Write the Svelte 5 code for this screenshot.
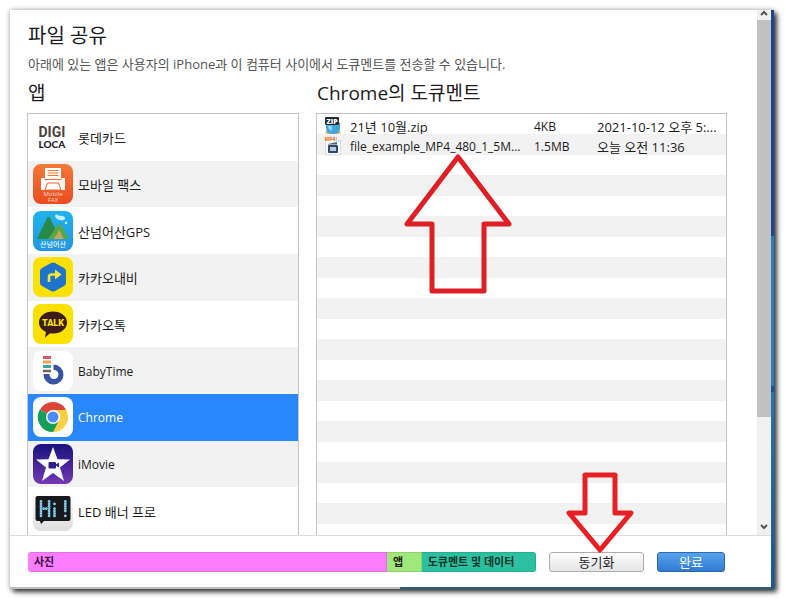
<script>
  let selected = $state('chrome');

  const apps = [
    { id: 'digiloca', name: '롯데카드' },
    { id: 'fax', name: '모바일 팩스' },
    { id: 'gps', name: '산넘어산GPS' },
    { id: 'navi', name: '카카오내비' },
    { id: 'talk', name: '카카오톡' },
    { id: 'baby', name: 'BabyTime' },
    { id: 'chrome', name: 'Chrome' },
    { id: 'imovie', name: 'iMovie' },
    { id: 'led', name: 'LED 배너 프로' }
  ];

  const files = [
    { kind: 'zip', name: '21년 10월.zip', size: '4KB', date: '2021-10-12 오후 5:...' },
    { kind: 'mp4', name: 'file_example_MP4_480_1_5M...', size: '1.5MB', date: '오늘 오전 11:36' }
  ];

  // striped rows under the files
  const emptyRows = Array(19).fill(0);

  const usage = [
    { id: 'photos', label: '사진', share: 360 },
    { id: 'apps', label: '앱', share: 34 },
    { id: 'docs', label: '도큐멘트 및 데이터', share: 114 }
  ];

  // lit dots of the LED sign
  const led = [
    '1001000001',
    '1001010001',
    '1001000001',
    '1111010001',
    '1001010001',
    '1001010000',
    '1001010001'
  ];

  const hasHangul = (text) => /[가-힣]/.test(text);
</script>

<div class="desktop">
  <div class="window">
    <div class="body">
      <main>
        <header>
          <h1>파일 공유</h1>
          <p>아래에 있는 앱은 사용자의 iPhone과 이 컴퓨터 사이에서 도큐멘트를 전송할 수 있습니다.</p>
        </header>
        <div class="columns">
          <section>
            <h2>앱</h2>
            <ul class="apps">
              {#each apps as app}
                <li>
                  <button class="app" class:selected={selected === app.id} onclick={() => (selected = app.id)}>
                    <svg class="icon" viewBox="0 0 40 40" aria-hidden="true">
                      {#if app.id === 'digiloca'}
                        <rect width="40" height="40" rx="8" fill="#fff" />
                        <text x="5.500" y="20" font-size="14" font-weight="700" class="digi">DIGI</text>
                        <text x="5.500" y="30.500" font-size="10" font-weight="900" class="loca">LOCA</text>
                      {:else if app.id === 'fax'}
                        <defs>
                          <linearGradient id="fax" x2="0" y2="1"><stop stop-color="#f47a38" /><stop offset="1" stop-color="#ea4b1f" /></linearGradient>
                        </defs>
                        <rect width="40" height="40" rx="8" fill="url(#fax)" />
                        <rect x="12" y="4" width="16" height="11" fill="#fff" />
                        <path d="M14.500 6.500h11M14.500 9h11M14.500 11.500h11" stroke="#f17336" stroke-width="1.200" />
                        <path d="M8 14h3.500v2h17v-2H32v12h-4l-2-6H14l-2 6H8z" fill="#fff" />
                        <path d="M14.500 19h11l2.500 7H12z" fill="#fff" stroke="#ef6430" />
                        <text x="20" y="32" text-anchor="middle" font-size="6" fill="#ffd8c4">Mobile</text>
                        <text x="20" y="38" text-anchor="middle" font-size="6" fill="#ffd8c4">FAX</text>
                      {:else if app.id === 'gps'}
                        <defs>
                          <linearGradient id="gps" x2="0" y2="1"><stop stop-color="#20b2ec" /><stop offset="1" stop-color="#2496e3" /></linearGradient>
                        </defs>
                        <rect width="40" height="40" rx="8" fill="url(#gps)" />
                        <path d="M4 28 14 7q1.500-2.500 3 0l10 21z" fill="#278a47" />
                        <path d="M15 28l10-14q1.500-2 3 0l8 14z" fill="#55a846" />
                        <path d="M21 28c1-4 5-5 4-9 5 3 3 6 6 9z" fill="#c9a557" />
                        <path d="M22 5c1-3 4-1 4 0 2-1 7 0 6 3-2 3-9 1-10-3z" fill="#c5efff" />
                        <circle cx="33" cy="12" r="1.300" fill="#c5efff" />
                        <text x="20" y="36" text-anchor="middle" font-size="7" font-weight="500" fill="#e9faff">산넘어산</text>
                      {:else if app.id === 'navi'}
                        <rect width="40" height="40" rx="8" fill="#fae100" />
                        <path d="M18 6q2-1.200 4 0l9 5q2 1.200 2 3v12q0 2-2 3l-9 5q-2 1.200-4 0l-9-5q-2-1-2-3V14q0-2 2-3z" fill="#1e74c9" />
                        <path d="M16 25v-5q0-2.500 2.500-2.500H24" fill="none" stroke="#f3e638" stroke-width="2.600" />
                        <path d="M22 12.500 28.500 17.500 22 22.500z" fill="#f3e638" />
                      {:else if app.id === 'talk'}
                        <rect width="40" height="40" rx="8" fill="#fae100" />
                        <path d="M20 7.500c8 0 14 4.700 14 11s-6 11-14 11q-2 0-3-.3l-5 4.300 1-5.500c-4-2-7-5-7-9.500 0-6.300 6-11 14-11z" fill="#3b1c1a" />
                        <text x="20" y="22" text-anchor="middle" font-size="9" font-weight="900" class="talk">TALK</text>
                      {:else if app.id === 'baby'}
                        <rect width="40" height="40" rx="8" fill="#fff" />
                        <path d="M10.500 23a10 10 0 1 0 10-9.500V19a4.500 4.500 0 1 1-4 4z" fill="#3953a4" />
                        <path d="M10 6.500h8" stroke="#d9536b" stroke-width="3" />
                        <path d="M10 11h8" stroke="#efa54c" stroke-width="3" />
                        <path d="M10 15.500h8" stroke="#38a6a0" stroke-width="3" />
                        <path d="M10 20h8" stroke="#765e62" stroke-width="2.500" />
                      {:else if app.id === 'chrome'}
                        <rect width="40" height="40" rx="8" fill="#fff" />
                        <path d="M20 20 7 12.500A15 15 0 0 1 33 12.500z" fill="#dc4437" />
                        <path d="M20 20 33 12.500A15 15 0 0 1 20 35z" fill="#fdd043" />
                        <path d="M20 20v15A15 15 0 0 1 7 12.500z" fill="#159d59" />
                        <path d="M20 13h13A15 15 0 0 1 20 35l6-11.500z" fill="#fdd043" />
                        <path d="m14 23.500L7 12.500A15 15 0 0 0 20 35l6-11.500z" fill="#159d59" />
                        <circle cx="20" cy="20" r="7" fill="#fff" />
                        <circle cx="20" cy="20" r="5.500" fill="#4b8bf5" />
                      {:else if app.id === 'imovie'}
                        <defs>
                          <linearGradient id="imovie" x2="0" y2="1"><stop stop-color="#17127d" /><stop offset="1" stop-color="#7438b3" /></linearGradient>
                        </defs>
                        <rect width="40" height="40" rx="8" fill="url(#imovie)" />
                        <path d="m20 3 4.500 12.200L37 15.500 27 23.500 31 37l-11-8-11 8 4-13.500-10-8 12.500-.3z" fill="#fff" />
                        <rect x="15.500" y="18" width="7.500" height="6.500" rx="1" fill="#321c89" />
                        <path d="m22 21 4-2.500v5z" fill="#321c89" />
                      {:else}
                        <defs>
                          <linearGradient id="led" x2="0" y2="1"><stop stop-color="#fff" /><stop offset="1" stop-color="#dedede" /></linearGradient>
                        </defs>
                        <rect width="40" height="40" rx="8" fill="url(#led)" />
                        <path d="M4.500 5h31q2 0 2 2v21q0 2-2 2H11l-3 3-1-3H4.500q-2 0-2-2V7q0-2 2-2z" fill="#17181b" />
                        {#each led as line, y}
                          {#each line as dot, x}
                            {#if dot === '1'}
                              <circle cx={8 + x * 2.7} cy={10.5 + y * 2.4} r="1.400" fill="#83cbed" />
                            {/if}
                          {/each}
                        {/each}
                      {/if}
                    </svg>
                    <span class:hangul={hasHangul(app.name)}>{app.name}</span>
                  </button>
                </li>
              {/each}
            </ul>
          </section>

          <section>
            <h2>Chrome의 도큐멘트</h2>
            <div class="files">
              <table>
                <tbody>
                  {#each files as file}
                    <tr>
                      <td class="kind">
                        <svg viewBox="0 0 18 20" aria-hidden="true">
                          {#if file.kind === 'zip'}
                            <ellipse cx="9" cy="16.500" rx="8" ry="2" fill="#e5b84b" />
                            <path d="M2 7h14v5q0 6-7 6t-7-6z" fill="#41a5de" />
                            <path d="M4 10h4v5q-4-1-4-5z" fill="#91d3f5" />
                            <rect x="1" y="1" width="14" height="8" rx="1" fill="#222c37" />
                            <text x="8" y="7.500" text-anchor="middle" font-size="7" font-weight="800" fill="#fff">ZIP</text>
                          {:else}
                            <path d="M1.500 1h11l4 4v14h-15z" fill="#f8fafb" stroke="#d5dbe0" />
                            <path d="M12.500 1v4h4" fill="#fff" stroke="#bec5cb" />
                            <text x="6" y="4.500" text-anchor="middle" font-size="5" font-weight="800" fill="#ee8435">MP4</text>
                            <path d="m4 8 9-2v2.500H4z" fill="#53606d" />
                            <rect x="4" y="9" width="10" height="8" rx="1" fill="#33475e" />
                            <rect x="6" y="11" width="6" height="4" fill="#b3cce6" />
                          {/if}
                        </svg>
                      </td>
                      <td class:hangul={hasHangul(file.name)}>{file.name}</td>
                      <td>{file.size}</td>
                      <td class:hangul={hasHangul(file.date)}>{file.date}</td>
                    </tr>
                  {/each}
                  {#each emptyRows as _}
                    <tr></tr>
                  {/each}
                </tbody>
              </table>
              <svg class="arrow up" viewBox="0 0 110 144" aria-hidden="true">
                <path d="M55 5 106 72H81v67H29V72H4z" />
              </svg>
            </div>
          </section>
        </div>
      </main>
      <div class="scrollbar" aria-hidden="true">
        <svg viewBox="0 0 14 10"><path d="m4 5 3-3 3 3" /></svg>
        <div class="track"><div class="thumb"></div></div>
        <svg class="bottom" viewBox="0 0 14 10"><path d="m4 2 3 3 3-3" /></svg>
      </div>
    </div>

    <footer>
      <div class="usage">
        {#each usage as part}
          <div class="part {part.id}" style="flex-grow: {part.share}">{part.label}</div>
        {/each}
      </div>
      <div class="sync">
        <button>동기화</button>
        <svg class="arrow down" viewBox="0 0 70 84" aria-hidden="true">
          <path d="M20 5h30v38h16L35 80 4 43h16z" />
        </svg>
      </div>
      <button class="done">완료</button>
    </footer>
  </div>
</div>

<style>
  :global(body) {
    background: #fff;
  }
  * {
    box-sizing: border-box;
  }
  .desktop {
    height: 100vh;
    min-height: 500px;
    padding: 10px 12px 11px 10px;
    font-family: "Open Sans", "Noto Sans CJK KR", sans-serif;
    font-size: 12px;
    color: #1c1c1c;
  }
  /* the wallpaper shows as a thin strip right and below */
  .window {
    display: flex;
    flex-direction: column;
    height: 100%;
    padding: 0 3px 2px 0;
    background:
      linear-gradient(#16459b 39%, #2380bd 39%, #2380bd 65%, #15539f 65%, #15539f 66%, #1f78b2 66%, #17589a) right / 3px 100% no-repeat,
      linear-gradient(to right, #bdbdbd 51%, #2a5f80 51%);
    box-shadow: 0 0 5px rgba(0, 0, 0, 0.3), 3px 3px 5px rgba(0, 0, 0, 0.75);
  }
  .body {
    display: flex;
    flex: 1;
    min-height: 0;
    background: #fff;
  }
  main {
    display: flex;
    flex-direction: column;
    flex: 1;
    min-width: 0;
    padding: 14px 30px 0 17px;
  }
  h1,
  h2,
  p {
    margin: 0;
    padding-left: 1px;
    font-weight: 400;
    white-space: nowrap;
  }
  h1 {
    font-size: 20px;
    line-height: 24px;
  }
  h2 {
    font-size: 19px;
    line-height: 24px;
    margin-bottom: 8px;
  }
  p {
    margin: 8px 0;
    font-size: 13px;
    line-height: 17px;
    color: #555;
  }
  .hangul {
    font-size: 13px;
  }
  .columns {
    display: grid;
    grid-template-columns: minmax(0, 272fr) minmax(0, 411fr);
    gap: 17px;
    flex: 1;
    min-height: 0;
  }
  section {
    display: flex;
    flex-direction: column;
    min-height: 0;
  }
  ul,
  .files {
    flex: 1;
    min-height: 0;
    border: 1px solid #c4c4c4;
    border-bottom: none;
  }
  ul {
    display: grid;
    grid-auto-rows: minmax(0, 1fr);
    margin: 0;
    padding: 0 0 1px;
    list-style: none;
  }
  .app {
    display: flex;
    align-items: center;
    gap: 5px;
    width: 100%;
    height: 100%;
    padding: 0 5px;
    border: none;
    background: transparent;
    color: inherit;
    font: inherit;
    text-align: left;
  }
  .app span {
    padding-top: 2px;
    line-height: 20px;
  }
  li:nth-child(even) {
    background: #f2f2f2;
  }
  .app.selected {
    background: #2787fb;
    color: #fff;
  }
  .icon {
    flex: none;
    width: 40px;
    height: 40px;
  }
  .digi {
    font-family: Roboto, sans-serif;
    fill: #4b4541;
  }
  .loca {
    font-family: Lato, sans-serif;
    fill: #25211f;
  }
  .talk {
    font-family: Roboto, sans-serif;
    fill: #fae100;
  }
  .files {
    position: relative;
  }
  table {
    display: block;
    height: 100%;
  }
  tbody {
    display: grid;
    grid-template-rows: repeat(20, minmax(0, 20fr)) minmax(0, 11fr);
    height: 100%;
  }
  tr {
    display: grid;
    grid-template-columns: 33px 184px 63px minmax(0, 1fr);
    align-items: center;
  }
  tr:nth-child(even) {
    background: #f2f2f2;
  }
  td {
    padding: 3px 0 0;
    line-height: 20px;
    white-space: nowrap;
  }
  .kind {
    padding: 0 0 0 7px;
  }
  .kind svg {
    display: block;
    width: 18px;
    height: 20px;
  }
  .arrow {
    position: absolute;
    z-index: 1;
    fill: none;
    stroke: #df1f26;
    stroke-width: 5;
    stroke-linejoin: round;
    pointer-events: none;
  }
  .up {
    left: 86px;
    top: 38px;
    width: 110px;
    height: 144px;
  }
  .scrollbar {
    display: flex;
    flex-direction: column;
    width: 14px;
    background: #f0f0f0;
  }
  .scrollbar svg {
    width: 14px;
    height: 10px;
    fill: none;
    stroke: #555;
    stroke-width: 2;
  }
  .scrollbar .bottom {
    margin-bottom: 2px;
  }
  .track {
    flex: 1;
  }
  .thumb {
    height: 79%;
    background: #c1c1c1;
  }
  footer {
    display: flex;
    align-items: center;
    gap: 13px;
    height: 52px;
    padding: 0 46px 0 18px;
    border-top: 1px solid #dcdcdc;
    background: #fff;
  }
  .usage {
    display: flex;
    flex: 1;
    height: 20px;
    border-radius: 3px;
    overflow: hidden;
  }
  .part {
    flex-basis: 0;
    min-width: 0;
    border: 1px solid rgba(0, 0, 0, 0.1);
    border-left: none;
    font-size: 11px;
    font-weight: 700;
    line-height: 18px;
    text-indent: 6px;
    white-space: nowrap;
  }
  .photos {
    background: #fb7dfd;
    color: #3a1040;
  }
  .part.apps {
    background: #a1e87b;
  }
  .docs {
    background: #2bc1a0;
    color: #06352a;
  }
  .sync {
    position: relative;
  }
  footer button {
    display: block;
    width: 95px;
    height: 20px;
    padding: 0;
    border: 1px solid #adadad;
    border-radius: 3px;
    background: linear-gradient(#fdfdfd, #e4e4e4);
    color: #1c1c1c;
    font: inherit;
    font-size: 13px;
    line-height: 18px;
  }
  footer .done {
    width: 68px;
    border-color: #2b66b1;
    background: linear-gradient(#55a3ec, #317bd4);
    color: #fff;
  }
  .down {
    right: 9px;
    bottom: 18px;
    width: 70px;
    height: 84px;
    stroke: #e91f26;
  }
</style>
